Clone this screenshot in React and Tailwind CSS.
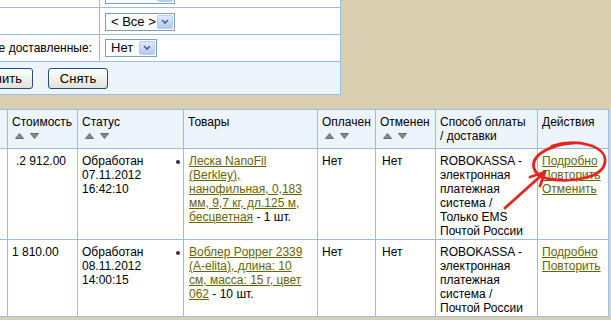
import React from "react";

const Arrows = () => (
    <svg width="26" height="6" viewBox="0 0 26 6" className="mt-[4px] ml-[3px] mb-[4px] block">
        <path d="M0.5 5.5 L4.5 0.5 L8.5 5.5 Z" fill="#8a8a8a" stroke="#555" strokeWidth="0.8" />
        <path d="M15.5 0.5 L23.5 0.5 L19.5 5.5 Z" fill="#8a8a8a" stroke="#555" strokeWidth="0.8" />
    </svg>
);

const Select = ({ label, width }) => (
    <div className={`flex h-[18px] border border-[#7f9db9] bg-white ${width}`}>
        <span className="flex-1 pl-[5px] text-[13px] leading-[16px] text-black whitespace-nowrap">{label}</span>
        <span className="w-[16px] m-[1px] flex items-center justify-center rounded-[2px] border border-[#b7cbf5] bg-gradient-to-b from-[#e1eafe] to-[#b4c8f5]">
            <svg width="8" height="6" viewBox="0 0 8 6"><path d="M1 1 L4 4 L7 1" fill="none" stroke="#4d6185" strokeWidth="1.6" /></svg>
        </span>
    </div>
);

const Btn = ({ children, cls }) => (
    <button className={`h-[21px] flex items-center rounded-[3px] border border-[#1d4f83] bg-gradient-to-b from-white to-[#e2e2d9] text-[13px] text-black whitespace-nowrap overflow-hidden ${cls}`}>
        {children}
    </button>
);

const Dot = () => <span className="absolute left-[-13px] top-[6px] w-[4px] h-[4px] rounded-full bg-[#333]" />;

const Link = ({ children }) => <span className="text-[#666600] underline">{children}</span>;

const cell = "border-r border-b border-[#9cbde0]";
const hd = "border-r border-b border-[#9cbde0] bg-[#eef4fb] pl-[4px] py-[5px]";
const bd = "border-r border-b border-[#9cbde0] bg-white pl-[4px] pt-[5px] pb-[1px]";

export default function App() {
    return (
        <div className="relative w-[611px] h-[320px] overflow-hidden bg-[#dbcfb2] font-['Liberation_Sans',Arial,sans-serif] text-[12px] leading-[14px] text-black">
            {/* filter panel */}
            <div className="-mt-[19px] w-[341px] border-r border-b border-[#9cbde0] bg-white">
                <div className="grid grid-cols-[100px_1fr] h-[27px] border-b border-[#9cbde0]">
                    <div className="border-r border-[#9cbde0]" />
                    <div className="pl-[5px] pt-[5px]"><Select label="< Все >" width="w-[70px]" /></div>
                </div>
                <div className="grid grid-cols-[100px_1fr] h-[27px] border-b border-[#9cbde0]">
                    <div className="border-r border-[#9cbde0]" />
                    <div className="pl-[5px] pt-[5px]"><Select label="< Все >" width="w-[70px]" /></div>
                </div>
                <div className="grid grid-cols-[100px_1fr] h-[27px] border-b border-[#9cbde0]">
                    <div className="flex justify-end items-center overflow-hidden whitespace-nowrap pr-[7px] border-r border-[#9cbde0] text-[12px]">
                        Показывать не доставленные:
                    </div>
                    <div className="pl-[5px] pt-[4px]"><Select label="Нет" width="w-[52px]" /></div>
                </div>
                <div className="flex items-start gap-[15px] h-[32px] pt-[6px] bg-[#eef4fb]">
                    <Btn cls="w-[80px] -ml-[47px] justify-end pr-[10px]">Применить</Btn>
                    <Btn cls="w-[60px] justify-center">Снять</Btn>
                </div>
            </div>

            {/* orders table */}
            <div className="mt-[14px] w-[610px] border-r border-[#c8dcef]">
                <div className="grid grid-cols-[8px_70px_106px_134px_58px_60px_102px_71px] border-t border-[#9cbde0]">
                    <div className={`${cell} bg-[#eef4fb]`} />
                    <div className={hd}>Стоимость<Arrows /></div>
                    <div className={hd}>Статус<Arrows /></div>
                    <div className={hd}>Товары</div>
                    <div className={hd}>Оплачен<Arrows /></div>
                    <div className={hd}>Отменен<Arrows /></div>
                    <div className={hd}>Способ оплаты<br />/ доставки</div>
                    <div className={hd}>Действия</div>

                    <div className={`${cell} bg-white`} />
                    <div className={`${bd} pl-[8px]`}>.2 912.00</div>
                    <div className={bd}>Обработан<br />07.11.2012<br />16:42:10</div>
                    <div className={`${bd} pl-[5px]`}>
                        <div className="relative whitespace-nowrap">
                            <Dot />
                            <Link>Леска NanoFil<br />(Berkley),<br />нанофильная, 0,183<br />мм, 9,7 кг, дл.125 м,<br />бесцветная</Link> - 1 шт.
                        </div>
                    </div>
                    <div className={bd}>Нет</div>
                    <div className={`${bd} pl-[6px]`}>Нет</div>
                    <div className={`${bd} whitespace-nowrap`}>ROBOKASSA -<br />электронная<br />платежная<br />система /<br />Только EMS<br />Почтой России</div>
                    <div className={`${bd} whitespace-nowrap`}>
                        <Link>Подробно</Link><br /><Link>Повторить</Link><br /><Link>Отменить</Link>
                    </div>

                    <div className={`${cell} bg-white`} />
                    <div className={bd}>1 810.00</div>
                    <div className={bd}>Обработан<br />08.11.2012<br />14:00:15</div>
                    <div className={`${bd} pl-[5px]`}>
                        <div className="relative whitespace-nowrap">
                            <Dot />
                            <Link>Воблер Popper 2339<br />(A-elita), длина: 10<br />см, масса: 15 г, цвет<br />062</Link> - 10 шт.
                        </div>
                    </div>
                    <div className={bd}>Нет</div>
                    <div className={`${bd} pl-[6px]`}>Нет</div>
                    <div className={`${bd} whitespace-nowrap`}>ROBOKASSA -<br />электронная<br />платежная<br />система /<br />Почтой России</div>
                    <div className={`${bd} whitespace-nowrap`}>
                        <Link>Подробно</Link><br /><Link>Повторить</Link>
                    </div>
                </div>
            </div>

            {/* red hand-drawn annotation */}
            <svg className="absolute left-0 top-0 pointer-events-none" width="611" height="320" viewBox="0 0 611 320">
                <path d="M552 146 C 578 138, 607 146, 605 162 C 603 178, 572 183, 549 179 C 531 175, 527 160, 546 150 C 556 145, 566 143, 574 143"
                      fill="none" stroke="#e5261f" strokeWidth="2.8" strokeLinecap="round" />
                <path d="M505 208 L545 172 M545 172 L530 177 M545 172 L540 186 M543 174 L533 183"
                      fill="none" stroke="#e5261f" strokeWidth="2.8" strokeLinecap="round" />
            </svg>
        </div>
    );
}
